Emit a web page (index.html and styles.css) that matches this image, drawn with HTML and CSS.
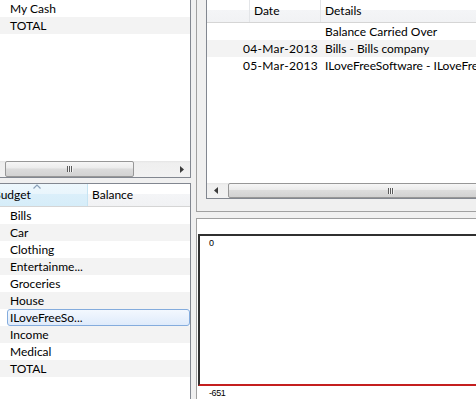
FILE: index.html
```html
<!DOCTYPE html>
<html>
<head>
<meta charset="utf-8">
<link rel="stylesheet" href="styles.css">
</head>
<body>
<div class="app">
  <div class="left">
    <div class="pane pane-accounts">
      <div class="list">
        <div class="row">My Cash</div>
        <div class="row alt">TOTAL</div>
      </div>
      <div class="hscroll">
        <div class="track">
          <div class="thumb thumb-accounts"><span class="grip"></span></div>
        </div>
        <div class="sbtn">
          <svg width="4" height="7" viewBox="0 0 4 7"><polygon points="0,0 4,3.5 0,7" fill="#3c3c3c"/></svg>
        </div>
      </div>
    </div>
    <div class="pane pane-budget">
      <div class="header">
        <div class="hcell hcell-sorted">
          <svg class="sort-arrow" width="8" height="5" viewBox="0 0 8 5"><polyline points="0.5,4.5 4,1 7.5,4.5" fill="none" stroke="#8aa0b8" stroke-width="1.2"/></svg>
          <span class="htext-shift">Budget</span>
        </div>
        <div class="hcell hcell-balance">Balance</div>
      </div>
      <div class="list">
        <div class="row">Bills</div>
        <div class="row alt">Car</div>
        <div class="row">Clothing</div>
        <div class="row alt">Entertainme...</div>
        <div class="row">Groceries</div>
        <div class="row alt">House</div>
        <div class="row sel">ILoveFreeSo...</div>
        <div class="row alt">Income</div>
        <div class="row">Medical</div>
        <div class="row alt">TOTAL</div>
      </div>
    </div>
  </div>
  <div class="right">
    <div class="group">
      <div class="lv">
        <div class="header lv-header">
          <div class="hcell c0"></div>
          <div class="hcell c1">Date</div>
          <div class="hcell c2">Details</div>
        </div>
        <div class="list">
          <div class="lrow"><span class="c-date"></span><span class="c-det">Balance Carried Over</span></div>
          <div class="lrow alt"><span class="c-date">04-Mar-2013</span><span class="c-det">Bills - Bills company</span></div>
          <div class="lrow"><span class="c-date">05-Mar-2013</span><span class="c-det">ILoveFreeSoftware - ILoveFreeSoftware</span></div>
        </div>
        <div class="hscroll hscroll-lv">
          <div class="sbtn sbtn-left">
            <svg width="4" height="7" viewBox="0 0 4 7"><polygon points="4,0 0,3.5 4,7" fill="#3c3c3c"/></svg>
          </div>
          <div class="track">
            <div class="thumb thumb-lv"><span class="grip"></span></div>
          </div>
        </div>
      </div>
    </div>
    <div class="chart-panel">
      <div class="chart">
        <span class="clabel clabel-top">0</span>
      </div>
      <div class="clabel clabel-bottom">-651</div>
    </div>
  </div>
</div>
</body>
</html>
```

FILE: styles.css
```css
* { box-sizing: border-box; }

html, body {
  margin: 0;
  padding: 0;
}

body {
  background: #f0f0f0;
  font-family: "Lato", "Open Sans", sans-serif;
  font-size: 12px;
  color: #000;
}

.app {
  display: flex;
  width: 476px;
  height: 399px;
  overflow: hidden;
}

.left {
  width: 191px;
  flex: none;
  display: flex;
  flex-direction: column;
  gap: 5px;
}

.pane {
  background: #fff;
  border-right: 1px solid #828790;
  overflow: hidden;
}

.pane-accounts {
  height: 178px;
  flex: none;
  border-bottom: 1px solid #828790;
  display: flex;
  flex-direction: column;
}

.pane-accounts .list {
  flex: 1;
}

.pane-budget {
  flex: 1;
  border-top: 1px solid #828790;
}

.row {
  height: 17px;
  line-height: 17px;
  padding-left: 10px;
  white-space: nowrap;
}

.alt { background: #f3f3f3; }

.row.sel {
  margin-left: 7px;
  padding-left: 2px;
  border: 1px solid #84acdd;
  border-radius: 3px;
  line-height: 15px;
  background: linear-gradient(#f3f8fe, #dfebfb);
}

/* scrollbars */
.hscroll {
  height: 16px;
  flex: none;
  display: flex;
  background: linear-gradient(#e4e4e4 0, #efefef 2px, #f2f2f2 100%);
}

.hscroll-lv { height: 15px; }

.track {
  flex: 1;
  display: flex;
  align-items: stretch;
  overflow: hidden;
}

.thumb {
  flex: none;
  border: 1px solid #979797;
  border-radius: 2px;
  background: linear-gradient(#f6f6f6 0%, #ececec 42%, #dcdcdc 50%, #d2d2d2 100%);
  display: flex;
  align-items: center;
  justify-content: center;
}

.thumb-accounts {
  margin-left: 5px;
  width: 129px;
}

.thumb-lv {
  margin-left: 4px;
  width: 325px;
}

.grip {
  width: 6px;
  height: 6px;
  background: repeating-linear-gradient(to right, #5a5a5a 0 1px, #f4f4f4 1px 2px);
}

.sbtn {
  width: 17px;
  flex: none;
  display: flex;
  align-items: center;
  justify-content: center;
}

/* headers */
.header {
  display: flex;
  height: 23px;
  border-bottom: 1px solid #d5d5d5;
  background: linear-gradient(#ffffff 0%, #ffffff 45%, #f4f5f7 45%, #f1f2f4 100%);
}

.hcell {
  line-height: 22px;
  padding-left: 4px;
  white-space: nowrap;
  border-right: 1px solid #e3e5e8;
  overflow: hidden;
}

.hcell-sorted {
  position: relative;
  width: 88px;
  flex: none;
  padding-left: 0;
  background: linear-gradient(#eef8fd 0%, #e9f5fc 45%, #dbeffa 45%, #d6edf9 100%);
  border-right: 1px solid #c6e4f3;
}

.htext-shift {
  display: inline-block;
  margin-left: -7px;
}

.sort-arrow {
  position: absolute;
  left: 33px;
  top: 0;
}

.hcell-balance {
  flex: 1;
  border-right: none;
}

/* right side */
.right {
  flex: 1;
  margin-left: 5px;
  display: flex;
  flex-direction: column;
  min-width: 0;
}

.group {
  height: 212px;
  flex: none;
  border-left: 1px solid #a0a0a0;
  border-bottom: 1px solid #a0a0a0;
  padding-left: 9px;
  padding-bottom: 12px;
}

.lv {
  height: 100%;
  background: #fff;
  border-left: 1px solid #828790;
  border-bottom: 1px solid #828790;
  display: flex;
  flex-direction: column;
  overflow: hidden;
}

.lv .list {
  flex: 1;
}

.c0 { width: 43px; flex: none; }
.c1 { width: 71px; flex: none; }
.c2 { flex: 1; border-right: none; }

.lrow {
  height: 17px;
  line-height: 17px;
  display: flex;
  padding-left: 36px;
  white-space: nowrap;
}

.c-date {
  width: 82px;
  flex: none;
  letter-spacing: 0.3px;
}

.c-det {
  flex: none;
}

.chart-panel {
  flex: 1;
  margin-top: 6px;
  background: #fff;
  border-top: 1px solid #a0a0a0;
  border-left: 1px solid #a0a0a0;
  padding-top: 15px;
  padding-left: 1px;
}

.chart {
  height: 152px;
  border-top: 2px solid #303030;
  border-left: 2px solid #303030;
  border-bottom: 2px solid #c41f1f;
  padding: 3px 0 0 9px;
}

.clabel {
  font-family: "Liberation Sans", Arial, sans-serif;
  font-size: 9px;
  letter-spacing: -0.4px;
  line-height: 9px;
  display: block;
}

.clabel-bottom {
  padding-left: 11px;
  margin-top: 3px;
}
```
